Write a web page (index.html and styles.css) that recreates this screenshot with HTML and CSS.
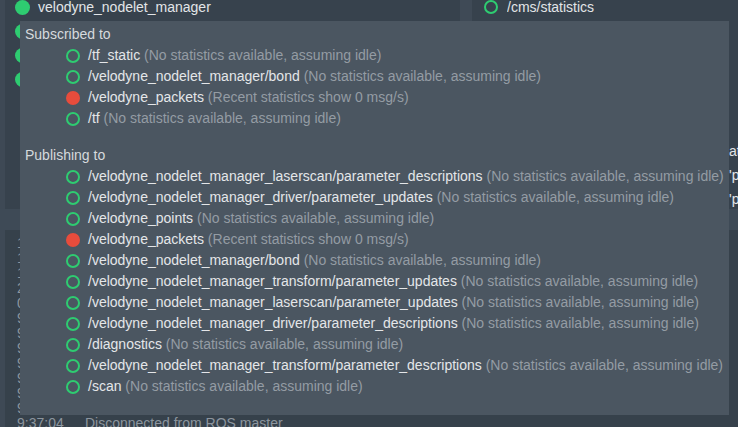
FILE: index.html
```html
<!DOCTYPE html>
<html>
<head>
<meta charset="utf-8">
<link rel="stylesheet" href="styles.css">
</head>
<body>
<div class="app">
  <div class="top">
    <div class="edge"></div>
    <div class="nodes">
      <div class="list">
        <div class="row"><span class="dot"></span><span class="name">velodyne_nodelet_manager</span></div>
        <div class="row"><span class="dot"></span><span class="name">velodyne_laserscan</span></div>
        <div class="row"><span class="dot"></span><span class="name">velodyne_driver</span></div>
        <div class="row"><span class="dot"></span><span class="name">velodyne_transform</span></div>
      </div>
    </div>
    <div class="splitter"></div>
    <div class="topics">
      <div class="list">
        <div class="row"><span class="ring"></span><span class="tname">/cms/statistics</span></div>
        <div class="row"><span class="ring"></span><span class="tname">/diagnostics</span></div>
        <div class="row"><span class="ring"></span><span class="tname">/scan</span></div>
        <div class="row"><span class="ring"></span><span class="tname">/tf</span></div>
        <div class="row"><span class="ring"></span><span class="tname">/tf_static</span></div>
        <div class="row"><span class="ring"></span><span class="tname">/velodyne_points</span></div>
        <div class="row"><span class="ring"></span><span class="tname">/velodyne_packets</span><span class="extra">at</span></div>
        <div class="row"><span class="ring"></span><span class="tname">/rosout</span><span class="extra">'p</span></div>
        <div class="row"><span class="ring"></span><span class="tname">/rosout_agg</span><span class="extra">'p</span></div>
      </div>
    </div>
  </div>
  <div class="band"></div>
  <div class="bottom">
    <div class="edge"></div>
    <div class="log">
      <div class="line"><span class="time">10:02:11</span>Node started</div>
      <div class="line"><span class="time">10:02:12</span>Node started</div>
      <div class="line"><span class="time">10:02:14</span>Node started</div>
      <div class="line"><span class="time">2:15:40</span>Node started</div>
      <div class="line"><span class="time">0:00:00</span>Node started</div>
      <div class="line"><span class="time">9:36:50</span>Node started</div>
      <div class="line"><span class="time">9:36:51</span>Node started</div>
      <div class="line"><span class="time">9:36:52</span>Node started</div>
      <div class="line"><span class="time">9:36:53</span>Node started</div>
      <div class="line"><span class="time">9:36:54</span>Node started</div>
      <div class="line"><span class="time">9:36:55</span>Node started</div>
      <div class="line"><span class="time">9:36:56</span>Node started</div>
      <div class="line"><span class="time">9:37:04</span>Disconnected from ROS master</div>
    </div>
  </div>
</div>

<div class="tooltip">
  <div class="head">Subscribed to</div>
  <div class="item"><span class="ico ok"></span><span class="topic">/tf_static</span>&nbsp;<span class="note">(No statistics available, assuming idle)</span></div>
  <div class="item"><span class="ico ok"></span><span class="topic">/velodyne_nodelet_manager/bond</span>&nbsp;<span class="note">(No statistics available, assuming idle)</span></div>
  <div class="item"><span class="ico err"></span><span class="topic">/velodyne_packets</span>&nbsp;<span class="note">(Recent statistics show 0 msg/s)</span></div>
  <div class="item"><span class="ico ok"></span><span class="topic">/tf</span>&nbsp;<span class="note">(No statistics available, assuming idle)</span></div>
  <div class="head second">Publishing to</div>
  <div class="item"><span class="ico ok"></span><span class="topic">/velodyne_nodelet_manager_laserscan/parameter_descriptions</span>&nbsp;<span class="note">(No statistics available, assuming idle)</span></div>
  <div class="item"><span class="ico ok"></span><span class="topic">/velodyne_nodelet_manager_driver/parameter_updates</span>&nbsp;<span class="note">(No statistics available, assuming idle)</span></div>
  <div class="item"><span class="ico ok"></span><span class="topic">/velodyne_points</span>&nbsp;<span class="note">(No statistics available, assuming idle)</span></div>
  <div class="item"><span class="ico err"></span><span class="topic">/velodyne_packets</span>&nbsp;<span class="note">(Recent statistics show 0 msg/s)</span></div>
  <div class="item"><span class="ico ok"></span><span class="topic">/velodyne_nodelet_manager/bond</span>&nbsp;<span class="note">(No statistics available, assuming idle)</span></div>
  <div class="item"><span class="ico ok"></span><span class="topic">/velodyne_nodelet_manager_transform/parameter_updates</span>&nbsp;<span class="note">(No statistics available, assuming idle)</span></div>
  <div class="item"><span class="ico ok"></span><span class="topic">/velodyne_nodelet_manager_laserscan/parameter_updates</span>&nbsp;<span class="note">(No statistics available, assuming idle)</span></div>
  <div class="item"><span class="ico ok"></span><span class="topic">/velodyne_nodelet_manager_driver/parameter_descriptions</span>&nbsp;<span class="note">(No statistics available, assuming idle)</span></div>
  <div class="item"><span class="ico ok"></span><span class="topic">/diagnostics</span>&nbsp;<span class="note">(No statistics available, assuming idle)</span></div>
  <div class="item"><span class="ico ok"></span><span class="topic">/velodyne_nodelet_manager_transform/parameter_descriptions</span>&nbsp;<span class="note">(No statistics available, assuming idle)</span></div>
  <div class="item"><span class="ico ok"></span><span class="topic">/scan</span>&nbsp;<span class="note">(No statistics available, assuming idle)</span></div>
</div>
</body>
</html>
```

FILE: styles.css
```css
* { box-sizing: border-box; }
html, body {
  margin: 0;
  padding: 0;
  width: 738px;
  height: 427px;
  overflow: hidden;
  background: #36414b;
  font-family: "Liberation Sans", Arial, sans-serif;
  font-size: 14px;
  color: #e2e5e8;
}
.app {
  display: flex;
  flex-direction: column;
  height: 427px;
}
.top {
  display: flex;
  height: 209px;
  flex: none;
}
.edge {
  width: 5px;
  flex: none;
  background: #3e4955;
}
.nodes {
  width: 455px;
  flex: none;
  background: #37424d;
  overflow: hidden;
  padding-left: 10px;
}
.list {
  margin-top: -5px;
}
.row {
  display: flex;
  align-items: center;
  height: 24px;
  white-space: nowrap;
}
.dot {
  width: 15px;
  height: 15px;
  border-radius: 50%;
  background: #2ecc71;
  flex: none;
  margin-right: 8px;
}
.name { color: #e2e5e8; }
.splitter {
  width: 12px;
  flex: none;
  background: #3f4a56;
}
.topics {
  flex: 1;
  background: #37424d;
  overflow: hidden;
  padding-left: 12px;
}
.ring {
  width: 14px;
  height: 14px;
  border-radius: 50%;
  border: 2px solid #2ecc71;
  flex: none;
  margin-right: 9px;
}
.tname {
  width: 222px;
  flex: none;
  overflow: hidden;
}
.extra { color: #e2e5e8; }
.band {
  height: 21px;
  flex: none;
  background: #3e4a56;
}
.bottom {
  flex: 1;
  display: flex;
  overflow: hidden;
}
.log {
  padding: 6px 0 0 12px;
  color: #8c959e;
  white-space: nowrap;
}
.line {
  height: 15px;
  line-height: 15px;
}
.time {
  display: inline-block;
  width: 68px;
}
.tooltip {
  position: absolute;
  left: 20px;
  top: 21px;
  width: 709px;
  height: 394px;
  background: #4b5661;
  padding: 3px 0 0 5px;
  white-space: nowrap;
  overflow: hidden;
}
.head {
  height: 21px;
  line-height: 21px;
  color: #d6dadd;
}
.head.second { margin-top: 16px; }
.item {
  display: flex;
  align-items: center;
  height: 21px;
  line-height: 21px;
  padding-left: 41px;
}
.ico {
  width: 14px;
  height: 14px;
  border-radius: 50%;
  flex: none;
  margin-right: 8px;
}
.ico.ok { border: 2px solid #2ecc71; }
.ico.err { background: #e74c3c; }
.topic { color: #e4e6e9; }
.note { color: #949ca4; }
```
